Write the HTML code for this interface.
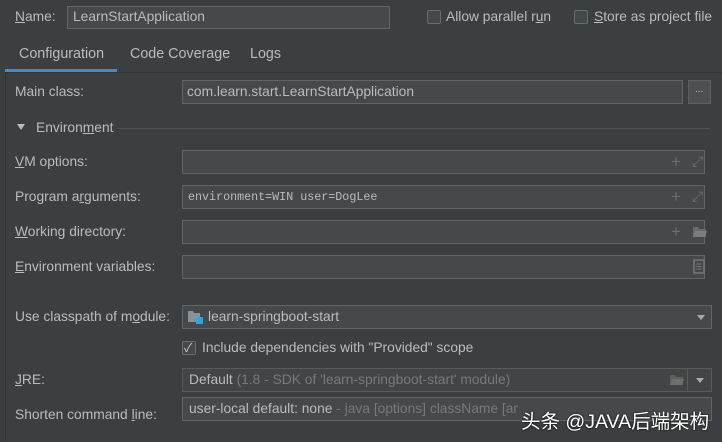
<!DOCTYPE html>
<html><head><meta charset="utf-8"><style>
*{margin:0;padding:0;box-sizing:border-box}
body{width:722px;height:442px;background:#3c3f41;font-family:"Liberation Sans","Noto Sans CJK SC",sans-serif;font-size:13.8px;color:#bbbbbb;position:relative;overflow:hidden}
.a{position:absolute;white-space:nowrap}
.f{position:absolute;background:#45494a;border:1px solid #646464;}
.lbl{position:absolute;left:15px;white-space:nowrap}
.cb{position:absolute;width:14px;height:14px;border:1px solid #6b6b6b;background:#43494a;border-radius:2px}
.mono{font-family:"Liberation Mono",monospace;font-size:11.7px}
u{text-decoration:underline}
.ic{position:absolute;color:#6e6e6e}
</style></head><body>
<div class="lbl" style="top:9px"><u>N</u>ame:</div>
<div class="f" style="left:67px;top:6px;width:323px;height:23px"></div>
<div class="a" style="left:73px;top:9px">LearnStartApplication</div>
<div class="cb" style="left:427px;top:10px"></div>
<div class="a" style="left:446px;top:9px">Allow parallel r<u>u</u>n</div>
<div class="cb" style="left:574px;top:10px"></div>
<div class="a" style="left:594px;top:9px"><u>S</u>tore as project file</div>

<div class="a" style="left:19px;top:46px;font-size:14.3px">Configuration</div>
<div class="a" style="left:130px;top:46px;font-size:14.3px">Code Coverage</div>
<div class="a" style="left:250px;top:46px;font-size:14.3px">Logs</div>
<div class="a" style="left:5px;top:69px;width:112px;height:3px;background:#4a88c7"></div>
<div class="a" style="left:5px;top:72px;width:717px;height:1px;background:#323232"></div>
<div class="a" style="left:5px;top:73px;width:1px;height:369px;background:#323232"></div>

<div class="lbl" style="top:84px">Main class:</div>
<div class="f" style="left:182px;top:80px;width:501px;height:24px"></div>
<div class="a" style="left:187px;top:84px">com.learn.start.LearnStartApplication</div>
<div class="f" style="left:688px;top:80px;width:23px;height:24px;background:#4c5052;border-color:#5e6060"></div>
<div class="a" style="left:695px;top:84px;font-size:10px">...</div>

<div class="a" style="left:17px;top:124px;width:0;height:0;border-left:4px solid transparent;border-right:4px solid transparent;border-top:6px solid #bbb"></div>
<div class="a" style="left:36px;top:120px">Environ<u>m</u>ent</div>
<div class="a" style="left:118px;top:128px;width:592px;height:1px;background:#4e5254"></div>

<div class="lbl" style="top:154px"><u>V</u>M options:</div>
<div class="f" style="left:182px;top:150px;width:523px;height:24px"></div>
<div class="ic" style="left:671px;top:152px;font-size:17px">+</div>
<div class="ic" style="left:692px;top:153px;font-size:14px">⤢</div>

<div class="lbl" style="top:189px">Program a<u>r</u>guments:</div>
<div class="f" style="left:182px;top:185px;width:523px;height:24px"></div>
<div class="a mono" style="left:188px;top:190px">environment=WIN user=DogLee</div>
<div class="ic" style="left:671px;top:187px;font-size:17px">+</div>
<div class="ic" style="left:692px;top:188px;font-size:14px">⤢</div>

<div class="lbl" style="top:224px"><u>W</u>orking directory:</div>
<div class="f" style="left:182px;top:220px;width:523px;height:24px"></div>
<div class="ic" style="left:671px;top:222px;font-size:17px">+</div>
<svg class="a" style="left:692px;top:226px" width="16" height="12"><path d="M1 1h5l1 2h7v8H1z" fill="#6a6a6a"/><path d="M3 5h12l-2 6H1z" fill="#7c7c7c"/></svg>

<div class="lbl" style="top:259px"><u>E</u>nvironment variables:</div>
<div class="f" style="left:182px;top:255px;width:523px;height:24px"></div>
<svg class="a" style="left:693px;top:259px" width="12" height="15"><rect x="1" y="1" width="10" height="13" fill="none" stroke="#777" stroke-width="1.5"/><path d="M3.5 5h5M3.5 7.5h5M3.5 10h5" stroke="#777"/></svg>

<div class="lbl" style="top:309px">Use classpath of m<u>o</u>dule:</div>
<div class="f" style="left:182px;top:305px;width:530px;height:24px"></div>
<svg class="a" style="left:188px;top:310px" width="16" height="15"><path d="M0 1h5l1 2h6v9H0z" fill="#8a9199"/><rect x="8" y="7" width="7" height="7" fill="#3aa0d8"/></svg>
<div class="a" style="left:208px;top:309px">learn-springboot-start</div>
<div class="a" style="left:697px;top:315px;border-left:4px solid transparent;border-right:4px solid transparent;border-top:5px solid #aaa"></div>

<div class="cb" style="left:182px;top:341px"></div>
<div class="a" style="left:184px;top:339px;font-size:12px;color:#ccc">✓</div>
<div class="a" style="left:202px;top:340px">Include dependencies with "Provided" scope</div>

<div class="lbl" style="top:372px"><u>J</u>RE:</div>
<div class="f" style="left:182px;top:368px;width:506px;height:24px;background:#414546;border-color:#5a5a5a"></div>
<div class="a" style="left:189px;top:372px">Default <span style="color:#767a7c">(1.8 - SDK of 'learn-springboot-start' module)</span></div>
<svg class="a" style="left:669px;top:374px" width="16" height="12"><path d="M1 1h5l1 2h7v8H1z" fill="#5e5e5e"/><path d="M3 5h12l-2 6H1z" fill="#6e6e6e"/></svg>
<div class="f" style="left:687px;top:368px;width:25px;height:24px;background:#414546;border-color:#5a5a5a"></div>
<div class="a" style="left:696px;top:378px;border-left:4px solid transparent;border-right:4px solid transparent;border-top:5px solid #aaa"></div>

<div class="lbl" style="top:407px">Shorten command <u>l</u>ine:</div>
<div class="f" style="left:182px;top:397px;width:530px;height:24px"></div>
<div class="a" style="left:189px;top:401px">user-local default: none <span style="color:#767a7c">- java [options] className [ar</span></div>
<div class="a" style="left:521px;top:405px;font-size:19.5px;color:#fff;text-shadow:0 0 2px #000">头条 @JAVA后端架构</div>
</body></html>
